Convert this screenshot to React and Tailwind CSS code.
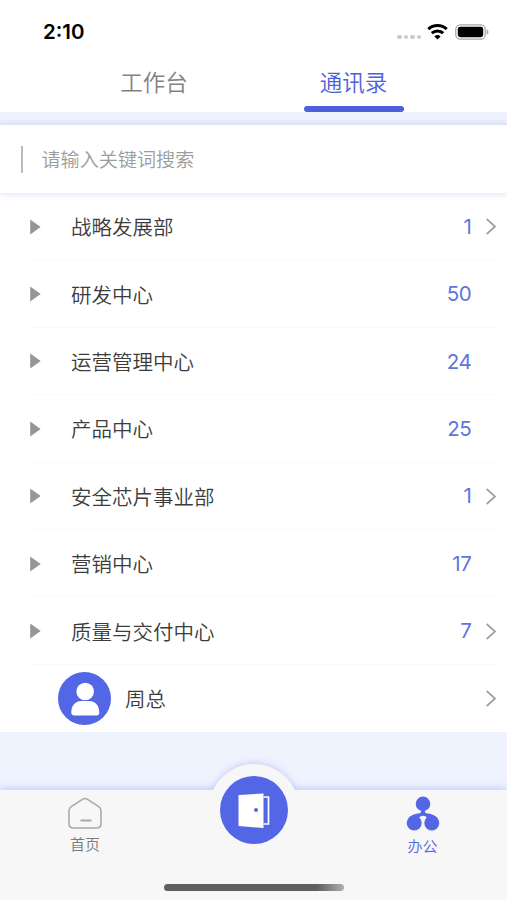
import React, { useState } from 'react';

const departments = [
  { name: '战略发展部', count: 1, hasMore: true },
  { name: '研发中心', count: 50, hasMore: false },
  { name: '运营管理中心', count: 24, hasMore: false },
  { name: '产品中心', count: 25, hasMore: false },
  { name: '安全芯片事业部', count: 1, hasMore: true },
  { name: '营销中心', count: 17, hasMore: false },
  { name: '质量与交付中心', count: 7, hasMore: true },
];

function Chevron() {
  return (
    <svg className="w-[10px] h-[17px]" viewBox="0 0 10 17" fill="none" stroke="#a0a0a0" strokeWidth="1.7">
      <path d="M0.7 1l8.300 7.5L0.7 16" />
    </svg>
  );
}

function StatusBar() {
  return (
    <div className="h-[56px] pl-[43px] pr-[18px] pt-[7px] flex items-center justify-between">
      <span className="text-[20.5px] leading-none font-semibold text-black font-['Inter',sans-serif] mt-[1px]">2:10</span>
      <div className="flex items-center">
        <div className="flex gap-[2px] mt-[11px] mr-[6px]">
          {[0, 1, 2, 3].map((dot) => (
            <span key={dot} className="w-[4.5px] h-[4.5px] rounded-full bg-[#cbcbcb]" />
          ))}
        </div>
        <svg className="w-[21px] h-[16px] mr-[7px]" viewBox="0 0 21 16" fill="none" stroke="#000" strokeWidth="3">
          <path d="M1.3 5.2a13.4 13.4 0 0 1 18.4 0" />
          <path d="M4.8 9.2a8.2 8.2 0 0 1 11.4 0" />
          <path d="M7.4 12.4a4.5 4.5 0 0 1 6.2 0L10.5 15.6z" fill="#000" stroke="none" />
        </svg>
        <svg className="w-[34px] h-[16px]" viewBox="0 0 34 16">
          <rect x="0.8" y="0.8" width="29.4" height="14.4" rx="4.5" fill="none" stroke="#a6a6a6" strokeWidth="1.3" />
          <rect x="2.8" y="2.8" width="25.4" height="10.4" rx="2.4" fill="#000" />
          <path d="M31.7 5.2c2.3 1 2.3 4.6 0 5.6z" fill="#a6a6a6" />
        </svg>
      </div>
    </div>
  );
}

export default function App() {
  const [tab, setTab] = useState('contacts');
  const [keyword, setKeyword] = useState('');

  return (
    <div className="w-[507px] h-[900px] flex flex-col overflow-hidden bg-[#eff3fe] text-[#3c3c3c] font-[350] font-['Noto_Sans_CJK_SC',sans-serif]">
      <header className="h-[112px] shrink-0 bg-white">
        <StatusBar />
        <div className="flex items-start h-[56px] pl-[55px] pr-[53px] text-[22.5px] leading-[50px]">
          <button onClick={() => setTab('work')} className="w-[198px] h-[50px] text-[#828282]">
            工作台
          </button>
          <button onClick={() => setTab('contacts')} className="w-[201px] flex flex-col items-center text-[#4f5fdb]">
            <span className="h-[50px] leading-[50px]">通讯录</span>
            {tab === 'contacts' && <span className="w-[100px] h-[6px] rounded-full bg-[#4f5fdb]" />}
          </button>
        </div>
      </header>

      <div className="h-[13px] shrink-0 bg-linear-to-b from-[#eef2fe] from-50% to-[#dde4fd]" />

      <div className="h-[68px] shrink-0 bg-white flex items-center pl-[21px] relative shadow-[0_1px_6px_#dcdff5]">
        <span className="w-[1.5px] h-[27px] bg-[#bbbbbb]" />
        <input
          value={keyword}
          onChange={(e) => setKeyword(e.target.value)}
          placeholder="请输入关键词搜索"
          className="ml-[19px] mb-[1px] w-[400px] text-[19.1px] leading-[28px] outline-none placeholder:text-[#9c9c9c]"
        />
      </div>

      <main className="shrink-0 bg-white text-[20.5px]">
        {departments.map((dept) => (
          <div key={dept.name} className="h-[67.4px] pt-[1px] ml-[28px] mr-[11px] flex items-center border-b border-[#f9f9f9]">
            <svg className="w-[11px] h-[16px] ml-[2px]" viewBox="0 0 11 16">
              <path d="M0.2 0.5L10.700 8L0.2 15.5z" fill="#969696" />
            </svg>
            <span className="ml-[30px] flex-1">{dept.name}</span>
            <span className="text-[#6074df] font-normal font-['Inter',sans-serif] text-[20.5px] tracking-[-0.3px] pt-[1px]">{dept.count}</span>
            <span className="w-[24.5px] flex justify-end">{dept.hasMore && <Chevron />}</span>
          </div>
        ))}
        <div className="h-[67.2px] pl-[58px] pr-[11px] flex items-center">
          <svg className="w-[53px] h-[53px]" viewBox="0 0 53 53">
            <circle cx="26.5" cy="26.5" r="26.5" fill="#5366e6" />
            <circle cx="27.2" cy="19.5" r="8.8" fill="#fff" />
            <path d="M13.3 40.500c0-7.500 4.500-11.500 10-11.500h8c5.500 0 10 4 10 11.500 0 2-1 3-3 3H16.300c-2 0-3-1-3-3z" fill="#fff" />
          </svg>
          <span className="ml-[14px] flex-1">周总</span>
          <Chevron />
        </div>
      </main>

      <div className="flex-1" />

      <nav className="relative h-[110px] shrink-0 shadow-[0_-2px_7px_#c5ccfa]">
        {/* raised bump behind the centre button */}
        <div className="absolute left-[209px] top-[-26px] w-[90px] h-[90px] rounded-full bg-[#f7f7f8] shadow-[0_-1px_7px_#c9c8fa]" />
        <div className="relative h-full bg-[#f7f7f8] flex justify-between">
          <div className="w-[170px] flex flex-col items-center pt-[7px] text-[15px] text-[#7c7c7c]">
            <svg className="w-[34px] h-[33px]" viewBox="0 0 34 33" fill="none" stroke="#a9a9a9" strokeWidth="1.6">
              <path d="M3.200 9.700L14.800 2.200Q17 0.800 19.200 2.200L30.800 9.700Q33 11.300 33 14V26.500Q33 31 28.500 31H5.500Q1 31 1 26.500V14Q1 11.300 3.200 9.700z" />
              <path d="M12.500 23.500h11" strokeWidth="2" />
            </svg>
            <span className="mt-[3px] leading-[22px]">首页</span>
          </div>
          <button className="mt-[-14px] w-[68px] h-[68px] rounded-full bg-[#5366e6]">
            <svg className="w-[68px] h-[68px]" viewBox="0 0 68 68">
              <path d="M18.500 19L43.500 17.500V52L18.500 50z" fill="#fff" />
              <path d="M43.500 21h5v27h-5" fill="none" stroke="#fff" strokeWidth="1.700" />
              <path d="M44.200 23h2.600v23h-2.600z" fill="#5366e6" />
              <circle cx="36" cy="34" r="2" fill="#5366e6" />
            </svg>
          </button>
          <div className="w-[169px] flex flex-col items-center pt-[6px] text-[15px] text-[#5568de]">
            <svg className="w-[34px] h-[36px]" viewBox="0 0 34 36">
              <g fill="#5366e6">
                <circle cx="17" cy="7.800" r="7.300" />
                <circle cx="8.200" cy="27" r="7.500" />
                <circle cx="25.800" cy="27" r="7.500" />
                <path d="M15.200 14h3.600q-0.300 2.500 1.200 3.200Q28 18 31.500 22L22 24Q20.500 19.800 17 19.800T12 24L2.500 22Q6 18 14 17.200Q15.500 16.500 15.200 14z" />
              </g>
            </svg>
            <span className="mt-[3px] leading-[22px]">办公</span>
          </div>
        </div>
        <div className="absolute bottom-[9px] left-[164px] w-[180px] h-[7px] rounded-full bg-linear-to-r from-[#5f5f5f] from-85% to-[#b0b0b0]" />
      </nav>
    </div>
  );
}
